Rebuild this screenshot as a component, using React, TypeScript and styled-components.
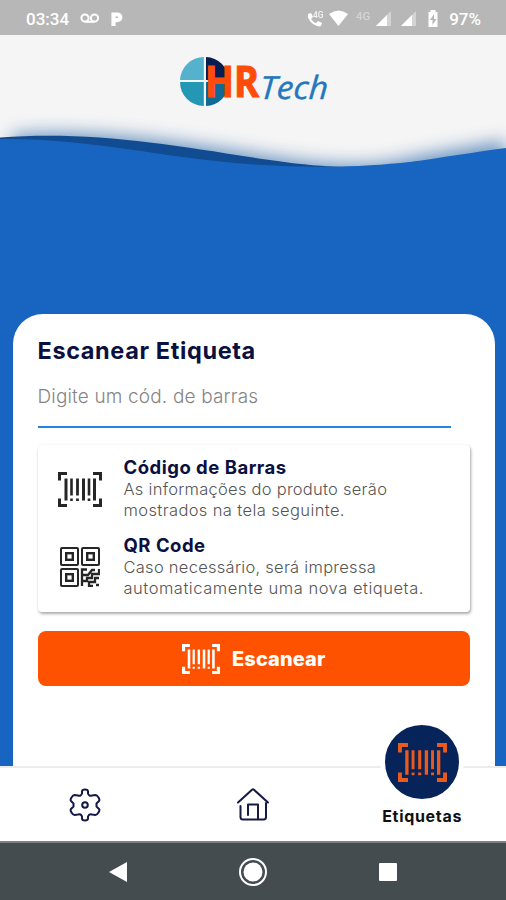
import React from "react";
import styled, { createGlobalStyle } from "styled-components";

const Global = createGlobalStyle`
  * { box-sizing: border-box; }
  body { margin: 0; background: #1765c0; font-family: Inter, Roboto, sans-serif; }
  svg { display: block; }
`;

const Screen = styled.div`
  width: 506px;
  height: 900px;
  display: flex;
  flex-direction: column;
  background: #1765c0;
  overflow: hidden;
`;

const StatusBar = styled.div`
  height: 35px;
  flex: none;
  display: flex;
  align-items: center;
  justify-content: space-between;
  padding: 2px 25px 0 26px;
  background: #b7b7b7;
  color: #fff;
  font: 500 17px/20px Roboto, sans-serif;
`;

const StatusGroup = styled.div<{ $gap: number }>`
  display: flex;
  align-items: center;
  gap: ${(p) => p.$gap}px;
`;

const Header = styled.header`
  height: 75px;
  flex: none;
  display: flex;
  justify-content: center;
  background: #f5f5f5;
`;

const WaveBox = styled.div`
  height: 80px;
  flex: none;
`;

const Card = styled.main`
  flex: 1;
  margin: 124px 11px 0 13px;
  padding: 22px 25px 0 24.5px;
  border-radius: 30px 30px 0 0;
  background: #fff;
`;

const Title = styled.h1`
  margin: 0;
  color: #0a1040;
  font-size: 23.5px;
  line-height: 30px;
  font-weight: 700;
  letter-spacing: 0.62px;
  white-space: nowrap;
`;

const Field = styled.div`
  width: 413.5px;
  height: 47px;
  margin-top: 15px;
  padding-top: 1px;
  border-bottom: 2px solid #2485dc;
  color: #858585;
  font-size: 19px;
  line-height: 30px;
  font-weight: 300;
  letter-spacing: 0.16px;
  white-space: nowrap;
`;

const Options = styled.section`
  height: 167px;
  margin-top: 17px;
  padding: 12px 0 0 20px;
  display: flex;
  flex-direction: column;
  gap: 14px;
  border-radius: 4px;
  background: #fff;
  box-shadow: 1px 2px 3px rgba(0, 0, 0, 0.32), 0 0 2px rgba(0, 0, 0, 0.08);
`;

const Option = styled.div`
  height: 64px;
  display: grid;
  grid-template-columns: 45px 1fr;
  column-gap: 21px;
  align-items: center;
`;

const OptionIcon = styled.div`
  display: flex;
  justify-content: center;
`;

const OptionName = styled.h2`
  margin: 0 0 1px;
  color: #0a1040;
  font-size: 18.5px;
  line-height: 21px;
  font-weight: 700;
  letter-spacing: 0.5px;
`;

const Line = styled.div<{ $spacing: number }>`
  color: #555;
  font-size: 16.5px;
  line-height: 21px;
  font-weight: 300;
  white-space: nowrap;
  letter-spacing: ${(p) => p.$spacing}px;
`;

const ScanButton = styled.button`
  width: 100%;
  height: 55px;
  margin-top: 19px;
  padding: 0;
  display: flex;
  align-items: center;
  justify-content: center;
  gap: 12px;
  border: 0;
  border-radius: 8px;
  background: #ff5200;
  color: #fff;
  font: 800 20px/24px Inter, sans-serif;
  letter-spacing: 0.1px;
`;

const TabBar = styled.nav`
  height: 75px;
  flex: none;
  display: grid;
  grid-template-columns: repeat(3, 1fr);
  justify-items: center;
  border-top: 2px solid #ececec;
  background: #fff;
`;

const Tab = styled.div`
  padding: 20px 0 0 1px;
`;

const ActiveTab = styled.div`
  display: flex;
  flex-direction: column;
  align-items: center;
  gap: 2px;
  margin: -48px 0 0 1px;
  color: #111;
  font-size: 16px;
  line-height: 20px;
  font-weight: 700;
  letter-spacing: 0.7px;
`;

const Bubble = styled.div`
  width: 84px;
  height: 84px;
  display: flex;
  align-items: center;
  justify-content: center;
  border: 5px solid #fff;
  border-radius: 50%;
  background: #06235a;
`;

const SystemBar = styled.div`
  height: 59px;
  flex: none;
  display: grid;
  grid-template-columns: 135px 135px 135px;
  justify-content: center;
  justify-items: center;
  align-items: center;
  border-top: 2px solid #7b8184;
  background: #454c50;
`;

const BarcodeIcon = ({ width, height, color, weight = 3 }: { width: number; height: number; color: string; weight?: number }) => (
  <svg width={width} height={height} viewBox="0 0 44 35">
    <g fill="none" stroke={color} strokeWidth={weight}>
      <path d="M1.500 8.500V1.500H9M35 1.500h7.500V8.500M1.500 26.500v7H9M35 33.500h7.500V26.500" />
      <path d="M8 6.500v22M36.500 6.500v22" strokeWidth="3" />
      <path d="M13.500 6.500v17M13.500 26.500v2.500M31 6.500v17M31 26.500v2.500" strokeWidth="2.600" />
      <path d="M19.500 6.500v17M19.500 26.500v2.500" strokeWidth="2.800" />
      <path d="M25.500 6.500v22" strokeWidth="3" />
    </g>
  </svg>
);

const QrIcon = () => (
  <svg width="40" height="40" viewBox="0 0 40 40" fill="none" stroke="#262626" strokeWidth="2">
    <rect x="1" y="1" width="17" height="17" rx="1" />
    <rect x="22" y="1" width="17" height="17" rx="1" />
    <rect x="1" y="22" width="17" height="17" rx="1" />
    <g strokeWidth="2.400">
      <rect x="6.200" y="6.200" width="6.600" height="6.600" />
      <rect x="27.200" y="6.200" width="6.600" height="6.600" />
      <rect x="6.200" y="27.200" width="6.600" height="6.600" />
    </g>
    <path strokeWidth="2.300" d="M22 39V22.500h5M22 28h6l4-5h3M39 22v5h-7v4h-5v3h-5M39 31h-4v4h-6v4h4M36 38h3" />
  </svg>
);

const Logo = () => (
  <svg width="160" height="75" viewBox="173 35 160 75">
    <path d="M203.800 57v23H180a24 24 0 0 1 23.800-23z" fill="#55b2cc" />
    <path d="M203.800 82v24A24 24 0 0 1 180 82z" fill="#2497b4" />
    <path d="M206 57a24 24 0 0 1 23 23h-23z" fill="#081e50" />
    <path d="M206 82h23a24 24 0 0 1-23 24z" fill="#116996" />
    <text x="205" y="97" fill="#ff4c0b" stroke="#ff4c0b" strokeWidth="1.200" fontFamily="Open Sans" fontWeight="700" fontSize="42.500" textLength="54" lengthAdjust="spacingAndGlyphs">HR</text>
    <text transform="translate(259.500 99) skewX(-3)" fill="#2377bd" stroke="#2377bd" strokeWidth=".4" fontFamily="Open Sans" fontStyle="italic" fontSize="32" textLength="68" lengthAdjust="spacingAndGlyphs">Tech</text>
  </svg>
);

const Wave = () => (
  <svg width="506" height="80" viewBox="0 110 506 80">
    <defs>
      <filter id="soft" x="-10%" y="-60%" width="120%" height="220%">
        <feGaussianBlur stdDeviation="9" />
      </filter>
    </defs>
    <rect y="110" width="506" height="80" fill="#f5f5f5" />
    <path d="M12 135C90 129 165 140 253 154S370 168 420 156L506 141V200H12z" fill="#2c66a8" opacity=".7" filter="url(#soft)" />
    <path d="M0 137.500C90 131 165 144 253 157.500S370 168 420 161V190H0z" fill="#114b91" />
    <path d="M0 139C90 138 155 157 253 164.500C330 169 370 166 410 162C440 158 475 152 506 148V190H0z" fill="#1765c0" />
  </svg>
);

const StatusIcons = () => (
  <svg width="134" height="24" viewBox="306 6 134 24" fill="#fff">
    <path d="M308 13l3-1 2 4-2 2q2 3 5 4l2-2 4 2-1 3q-3 1.500-8-2-6-5-5-10z" />
    <text x="313" y="17" opacity=".85" fontFamily="Roboto" fontWeight="500" fontSize="8.500">4G</text>
    <path d="M329 13q9.500-7 19 0l-9.500 12z" />
    <text x="356" y="18.500" opacity=".4" fontFamily="Roboto" fontWeight="500" fontSize="11.500">4G</text>
    <path d="M376 25l15-15v15z" opacity=".4" />
    <path d="M376 25l11-11v11z" />
    <path d="M401 25l15-15v15z" opacity=".4" />
    <path d="M401 25l11-11v11z" />
    <path fillRule="evenodd" d="M428.500 11h2V9h5v2h2v15h-9zM434 13l-4 6h2.500v5l4-6h-2.500z" />
  </svg>
);

const Cog = () => (
  <svg width="32" height="34" viewBox="0 0 32 34" fill="none" stroke="#151a45" strokeWidth="2" strokeLinejoin="round">
    <path d="M13 3.500Q13 1.500 16 1.500T19 3.500V5.500Q20 8.500 23 7.500L26.500 7Q28 7 29.500 9.500T30 13L27.500 15.500V18.500L30 21Q31 22 29.500 24.500T26.500 27L23 26.500Q20 25.500 19 28.500V30.500Q19 32.500 16 32.500T13 30.500V28.500Q12 25.500 9 26.500L5.500 27Q4 27 2.500 24.500T2 21L4.500 18.500V15.500L2 13Q1 12 2.500 9.500T5.500 7L9 7.500Q12 8.500 13 5.500z" />
    <circle cx="16" cy="17" r="2.800" />
  </svg>
);

const House = () => (
  <svg width="32" height="33" viewBox="0 0 32 33" fill="none" stroke="#151a45" strokeWidth="2" strokeLinecap="round" strokeLinejoin="round">
    <path d="M1 14.500L15 1.800q1-.8 2 0L31 14.500" />
    <path d="M3.500 18v11q0 2.500 2.500 2.500h20.500q2.500 0 2.500-2.500V15" />
    <path d="M11 27V16.500h10V31" />
  </svg>
);

export default function App() {
  return (
    <Screen>
      <Global />
      <StatusBar>
        <StatusGroup $gap={6}>
          <span>03:34</span>
          <svg width="48" height="20" viewBox="75 7 48 20" fill="none" stroke="#fff" strokeWidth="2">
            <circle cx="85" cy="16" r="3.600" />
            <circle cx="94.500" cy="16" r="3.600" />
            <path d="M85 19.800h9.500" />
            <path d="M113.500 24V12.500h4a2.800 2.800 0 0 1 0 5.600h-4" strokeWidth="4.200" />
          </svg>
        </StatusGroup>
        <StatusGroup $gap={9}>
          <StatusIcons />
          <span>97%</span>
        </StatusGroup>
      </StatusBar>
      <Header><Logo /></Header>
      <WaveBox><Wave /></WaveBox>
      <Card>
        <Title>Escanear Etiqueta</Title>
        <Field>Digite um cód. de barras</Field>
        <Options>
          <Option>
            <OptionIcon><BarcodeIcon width={44} height={35} color="#262626" /></OptionIcon>
            <div>
              <OptionName>Código de Barras</OptionName>
              <Line $spacing={0.26}>As informações do produto serão</Line>
              <Line $spacing={0.38}>mostrados na tela seguinte.</Line>
            </div>
          </Option>
          <Option>
            <OptionIcon><QrIcon /></OptionIcon>
            <div>
              <OptionName>QR Code</OptionName>
              <Line $spacing={0.27}>Caso necessário, será impressa</Line>
              <Line $spacing={0.52}>automaticamente uma nova etiqueta.</Line>
            </div>
          </Option>
        </Options>
        <ScanButton>
          <BarcodeIcon width={38} height={30} color="#fff" weight={4} />
          Escanear
        </ScanButton>
      </Card>
      <TabBar>
        <Tab><Cog /></Tab>
        <Tab><House /></Tab>
        <ActiveTab>
          <Bubble><BarcodeIcon width={49} height={39} color="#e95a1d" weight={4} /></Bubble>
          Etiquetas
        </ActiveTab>
      </TabBar>
      <SystemBar>
        <svg width="20" height="22" viewBox="0 0 20 22"><path d="M1 11L19 1v20z" fill="#fff" /></svg>
        <svg width="30" height="30" viewBox="0 0 30 30"><circle cx="15" cy="15" r="13" fill="none" stroke="#fff" strokeWidth="2" /><circle cx="15" cy="15" r="9.500" fill="#fff" /></svg>
        <svg width="20" height="20" viewBox="0 0 20 20"><rect x="1" y="1" width="18" height="18" rx="1" fill="#fff" /></svg>
      </SystemBar>
    </Screen>
  );
}
